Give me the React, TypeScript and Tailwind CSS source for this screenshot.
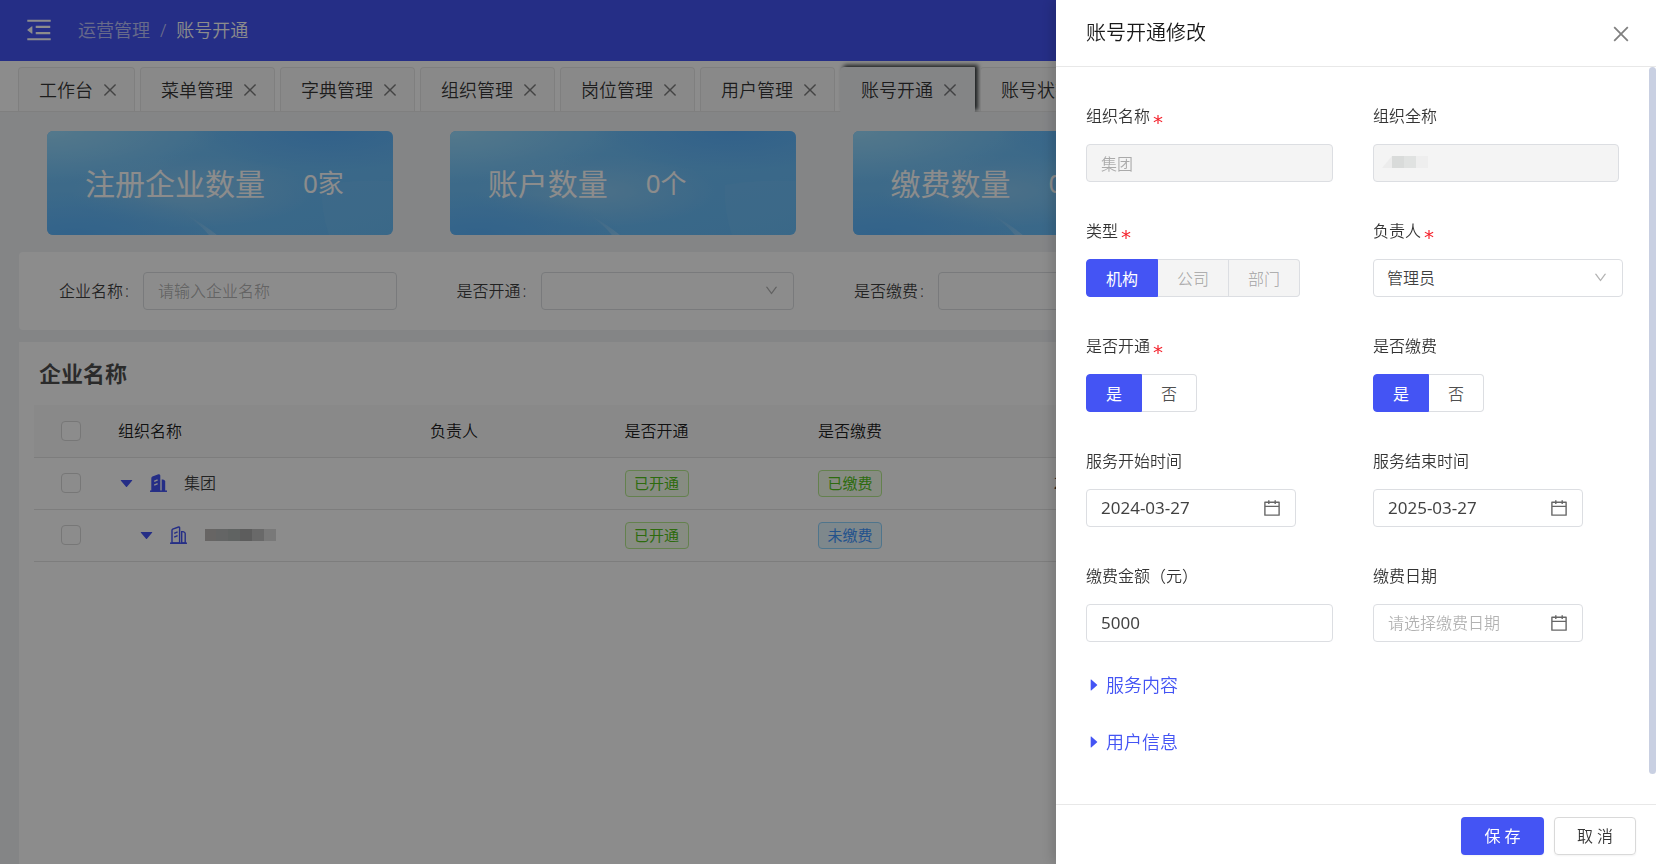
import { useState } from 'react'
import type { ReactNode } from 'react'
import {
  AiFillCaretDown,
  AiFillCaretRight,
  AiOutlineCalendar,
  AiOutlineClose,
  AiOutlineDown,
  AiOutlineMenuFold,
} from 'react-icons/ai'
import clsx from 'clsx'

const TABS = ['工作台', '菜单管理', '字典管理', '组织管理', '岗位管理', '用户管理', '账号开通', '账号状态']

const STATS = [
  { label: '注册企业数量', value: '0家' },
  { label: '账户数量', value: '0个' },
  { label: '缴费数量', value: '0个' },
  { label: '到期数量', value: '0个' },
]

const CONTROL = 'h-[38px] border border-[#dcdee2] rounded bg-white text-black/75 placeholder:text-black/30 outline-none'

function BuildingIcon({ filled = false }: { filled?: boolean }) {
  return (
    <svg width="17" height="18" viewBox="0 0 17 18" className="text-[#4454f4] shrink-0" aria-hidden="true">
      <path d="M0 17.2H17" stroke="currentColor" strokeWidth="1.5" />
      <path
        d="M2 17V4.4Q2 3.6 2.7 3.2L8.6 1Q9.6.8 9.6 1.7V17Z"
        fill={filled ? 'currentColor' : 'none'}
        stroke="currentColor"
        strokeWidth="1.4"
      />
      <path
        d="M11.7 5.6H13Q15.2 6.2 15.2 7.6V17H11.7Z"
        fill={filled ? 'currentColor' : 'none'}
        stroke={filled ? 'none' : 'currentColor'}
        strokeWidth="1.4"
      />
      <path d="M4.2 7.4L7.6 5.8M4.2 11.2L7.6 9.6" stroke={filled ? '#fff' : 'currentColor'} strokeWidth="1.4" />
    </svg>
  )
}

function StatCard({ label, value, id }: { label: string; value: string; id: string }) {
  return (
    <div className="relative h-[104px] rounded-md overflow-hidden bg-linear-to-br from-[#73c4fb] to-[#66bbf8]">
      <svg className="absolute inset-0 w-full h-full" viewBox="0 0 346 104" preserveAspectRatio="none" aria-hidden="true">
        <defs>
          <radialGradient id={`${id}-tl`} cx="0" cy="0" r="0.5">
            <stop offset="0" stopColor="#9adcff" />
            <stop offset="1" stopColor="#9adcff" stopOpacity="0" />
          </radialGradient>
          <radialGradient id={`${id}-bl`} cx="0.08" cy="1" r="0.42">
            <stop offset="0" stopColor="#5cb4fc" />
            <stop offset="1" stopColor="#5cb4fc" stopOpacity="0" />
          </radialGradient>
          <radialGradient id={`${id}-tr`} cx="0.82" cy="0" r="0.4">
            <stop offset="0" stopColor="#5ab0fb" />
            <stop offset="1" stopColor="#5ab0fb" stopOpacity="0" />
          </radialGradient>
          <radialGradient id={`${id}-mid`} cx="0.42" cy="0.58" r="0.35">
            <stop offset="0" stopColor="#8accf7" />
            <stop offset="1" stopColor="#8accf7" stopOpacity="0" />
          </radialGradient>
          <linearGradient id={`${id}-ray`} x1="0" y1="0" x2="1" y2="1">
            <stop offset="0" stopColor="#cdeaff" stopOpacity="0" />
            <stop offset="1" stopColor="#cdeaff" stopOpacity="0.35" />
          </linearGradient>
        </defs>
        <rect width="346" height="104" fill={`url(#${id}-mid)`} />
        <rect width="346" height="104" fill={`url(#${id}-tl)`} />
        <rect width="346" height="104" fill={`url(#${id}-bl)`} />
        <rect width="346" height="104" fill={`url(#${id}-tr)`} />
        <path d="M275 54Q310 48 346 50V104H282Q274 80 275 54Z" fill="#8fd0f8" fillOpacity="0.15" />
        <path d="M140 84Q158 94 170 104H162Q154 94 140 84Z" fill={`url(#${id}-ray)`} />
      </svg>
      <div className="relative h-full flex items-center gap-[38px] pl-[38px] text-white font-normal whitespace-nowrap">
        <span className="text-[30px]">{label}</span>
        <span className="text-[26px]">{value}</span>
      </div>
    </div>
  )
}

function Filter({ id, label, children }: { id: string; label: string; children: ReactNode }) {
  return (
    <div className="flex items-center px-[30px]">
      <label htmlFor={id} className="w-[84px] shrink-0 text-black/75 whitespace-nowrap">
        {label}<span className="ml-0.5">:</span>
      </label>
      {children}
    </div>
  )
}

function SelectBox({ id, children, className }: { id: string; children?: ReactNode; className?: string }) {
  return (
    <div className={clsx('relative', className)}>
      <select id={id} className={clsx(CONTROL, 'w-full appearance-none pl-[13px]')}>
        {children ?? <option value="" />}
      </select>
      <AiOutlineDown size={15} className="absolute right-[15px] top-[11px] text-black/30 pointer-events-none" />
    </div>
  )
}

function Tag({ color, children }: { color: 'green' | 'blue'; children: ReactNode }) {
  return (
    <span
      className={clsx(
        'inline-flex items-center justify-center w-16 h-[27px] border rounded text-[15px] font-normal',
        color === 'green' ? 'text-[#52c41a] bg-[#f6ffed] border-[#b7eb8f]' : 'text-[#4096ff] bg-[#e6f7ff] border-[#91d5ff]',
      )}
    >
      {children}
    </span>
  )
}

function TableCheckbox({ label }: { label: string }) {
  return (
    <input
      type="checkbox"
      aria-label={label}
      className="block mx-auto w-5 h-5 appearance-none border border-[#d9d9d9] rounded-sm bg-white checked:bg-[#4454f4]"
    />
  )
}

// Censored organisation name in the tree
function MaskedName() {
  return (
    <span className="flex h-3" aria-hidden="true">
      <i className="w-[11px] bg-[#bcb9b7]" />
      <i className="w-3 bg-[#b6b9b9]" />
      <i className="w-3 bg-[#b0b4b3]" />
      <i className="w-3 bg-[#a9a9a9]" />
      <i className="w-3 bg-[#c0c0c0]" />
      <i className="w-3 bg-[#dcdcdc]" />
    </span>
  )
}

function LabelText({ label, required }: { label: string; required?: boolean }) {
  return (
    <>
      {label}
      {required && <span className="ml-[3px] mt-3 text-xl leading-5 font-normal font-['DejaVu_Sans'] text-[#f5222d]">*</span>}
    </>
  )
}

function Field({ label, id, required, children }: { label: string; id: string; required?: boolean; children: ReactNode }) {
  return (
    <div className="h-[115px]">
      <label htmlFor={id} className="flex h-6 items-center mb-4 text-black/80">
        <LabelText label={label} required={required} />
      </label>
      {children}
    </div>
  )
}

function Segmented({ label, id, required, options, disabled }: {
  label: string
  id: string
  required?: boolean
  options: string[]
  disabled?: boolean
}) {
  const [value, setValue] = useState(options[0])
  return (
    <fieldset className="h-[115px]">
      <legend className="flex h-6 items-center mb-4 text-black/80">
        <LabelText label={label} required={required} />
      </legend>
      <div className="flex">
        {options.map(o => (
          <label
            key={o}
            className={clsx(
              'relative flex items-center justify-center h-[38px] pt-0.5 px-[19px] border border-l-0 first:border-l first:rounded-l last:rounded-r',
              value === o && 'bg-[#4454f4] border-[#4454f4] text-white font-normal',
              value !== o && disabled && 'bg-[#f4f4f4] border-[#dcdee2] text-black/30',
              value !== o && !disabled && 'bg-white border-[#dcdee2] text-black/70',
            )}
          >
            <input
              type="radio"
              name={id}
              value={o}
              checked={value === o}
              disabled={disabled}
              onChange={() => setValue(o)}
              className="absolute inset-0 opacity-0"
            />
            {o}
          </label>
        ))}
      </div>
    </fieldset>
  )
}

function DateBox({ id, value, placeholder }: { id: string; value?: string; placeholder?: string }) {
  return (
    <div className="relative w-[210px]">
      <input
        id={id}
        defaultValue={value}
        placeholder={placeholder}
        className={clsx(CONTROL, 'w-full pl-[14px] pr-10', value && 'pb-0.5 text-[17px] font-normal')}
      />
      <AiOutlineCalendar size={20} className="absolute right-[14px] top-[9px] text-black/60 pointer-events-none" />
    </div>
  )
}

function Drawer() {
  return (
    <section
      role="dialog"
      aria-label="账号开通修改"
      className="fixed right-0 inset-y-0 w-[600px] max-w-full bg-white flex flex-col shadow-[-4px_0_12px_rgba(0,0,0,0.15)]"
    >
      <header className="h-[67px] shrink-0 flex items-center justify-between pl-[30px] pr-6 border-b border-[#e8e8e8]">
        <h2 className="text-xl leading-6 text-black/90">账号开通修改</h2>
        <button aria-label="关闭" className="mt-0.5 text-black/50">
          <AiOutlineClose size={22} />
        </button>
      </header>

      <div className="flex-1 min-h-0 flex">
        <form className="flex-1 min-w-0 overflow-hidden pl-[30px] pt-[37px]">
          <div className="grid grid-cols-[287px_250px]">
            <Field label="组织名称" id="org-name" required>
              <input id="org-name" disabled defaultValue="集团" className={clsx(CONTROL, 'w-[247px] px-[14px] !bg-[#f4f4f4] !text-black/30')} />
            </Field>
            <Field label="组织全称" id="org-full">
              <div className="relative">
                <input id="org-full" disabled className={clsx(CONTROL, 'w-[246px] px-[14px] !bg-[#f4f4f4]')} />
                <span className="absolute left-[9px] top-3 flex h-3" aria-hidden="true">
                  <i className="w-[10px] bg-[#ececec] [clip-path:polygon(0_100%,100%_0,100%_100%)]" />
                  <i className="w-3 bg-[#d9dbda]" />
                  <i className="w-3 bg-[#e0e2e1]" />
                  <i className="w-3 bg-[#eeeeee]" />
                </span>
              </div>
            </Field>
            <Segmented label="类型" id="type" required disabled options={['机构', '公司', '部门']} />
            <Field label="负责人" id="owner" required>
              <SelectBox id="owner">
                <option>管理员</option>
              </SelectBox>
            </Field>
            <Segmented label="是否开通" id="opened" required options={['是', '否']} />
            <Segmented label="是否缴费" id="paid" options={['是', '否']} />
            <Field label="服务开始时间" id="start">
              <DateBox id="start" value="2024-03-27" />
            </Field>
            <Field label="服务结束时间" id="end">
              <DateBox id="end" value="2025-03-27" />
            </Field>
            <Field label="缴费金额（元）" id="amount">
              <input id="amount" defaultValue="5000" className={clsx(CONTROL, 'w-[247px] px-[14px] pb-0.5 text-[17px] font-normal')} />
            </Field>
            <Field label="缴费日期" id="pay-date">
              <DateBox id="pay-date" placeholder="请选择缴费日期" />
            </Field>
          </div>
          <div className="flex flex-col items-start gap-[33px] -mt-1.5 text-lg leading-6 text-[#4454f4]">
            {['服务内容', '用户信息'].map(t => (
              <button key={t} type="button" className="flex items-center gap-1">
                <AiFillCaretRight size={16} />
                {t}
              </button>
            ))}
          </div>
        </form>
        <div className="w-[7px] shrink-0 pb-[30px]">
          <div className="h-full rounded bg-[#c9d0e2]" />
        </div>
      </div>

      <footer className="h-[60px] shrink-0 flex items-center justify-end gap-[10px] pt-0.5 pr-5 border-t border-[#e8e8e8]">
        <button className="h-[38px] w-[83px] rounded-sm bg-[#4454f4] text-white font-normal shadow-xs">保 存</button>
        <button className="h-[38px] w-[82px] rounded-sm border border-[#d9d9d9] text-black/80 shadow-xs">取 消</button>
      </footer>
    </section>
  )
}

export default function App() {
  return (
    <div className="h-screen overflow-hidden flex flex-col bg-[#f0f2f5] text-base font-[350] font-['Noto_Sans','Noto_Sans_CJK_SC',sans-serif]">
      <header className="h-[61px] shrink-0 flex items-center pl-6 pb-0.5 bg-[#4454f4] text-white">
        <button aria-label="收起菜单">
          <AiOutlineMenuFold size={30} />
        </button>
        <nav className="flex items-center gap-[10px] ml-6 text-lg">
          <a href="#ops" className="text-white/65">运营管理</a>
          <span className="text-white/70">/</span>
          <span>账号开通</span>
        </nav>
      </header>

      <nav className="relative h-[51px] shrink-0 flex items-end gap-[5px] pl-[18px] bg-white border-b border-[#e8e8e8] [clip-path:inset(0)]">
        {TABS.map(t => (
          <div
            key={t}
            className={clsx(
              'shrink-0 flex items-center gap-2 pl-5 pr-[15px] border text-lg text-black/80 rounded-t',
              t === '账号开通'
                ? 'h-[45px] -mb-px rounded-tr-none bg-[#f0f2f5] border-[#f0f2f5] shadow-[3px_-2px_4px_#33393b]'
                : 'h-11 bg-[#fafafa] border-[#e8e8e8] border-b-0',
            )}
          >
            <a href="#tab">{t}</a>
            <button aria-label={`关闭${t}`} className="text-black/50">
              <AiOutlineClose size={18} />
            </button>
          </div>
        ))}
      </nav>

      <main className="flex-1 min-h-0 flex flex-col pl-[19px] pr-[27px]">
        <div className="shrink-0 grid grid-cols-4 gap-[57px] px-7 pt-[19px] pb-[17px]">
          {STATS.map((s, i) => (
            <StatCard key={s.label} id={`stat${i}`} {...s} />
          ))}
        </div>

        <form className="shrink-0 h-[78px] grid grid-cols-4 items-center pl-[10px] pr-[10px] bg-white rounded-sm">
          <Filter id="f-name" label="企业名称">
            <input id="f-name" placeholder="请输入企业名称" className={clsx(CONTROL, 'flex-1 min-w-0 px-[14px]')} />
          </Filter>
          <Filter id="f-open" label="是否开通">
            <SelectBox id="f-open" className="flex-1" />
          </Filter>
          <Filter id="f-paid" label="是否缴费">
            <SelectBox id="f-paid" className="flex-1" />
          </Filter>
        </form>

        <section className="flex-1 mt-3 pl-[15px] pr-[15px] bg-white">
          <h1 className="h-[63px] flex items-center pl-[5px] text-[22px] font-bold text-black/70">企业名称</h1>
          <table className="w-full table-fixed border-collapse">
            <colgroup>
              <col className="w-[74px]" />
              <col className="w-[312px]" />
              <col className="w-[140px]" />
              <col className="w-[193px]" />
              <col className="w-[194px]" />
              <col className="w-[302px]" />
              <col />
            </colgroup>
            <thead>
              <tr className="h-[52px] bg-[#fafafa] border-b border-[#e4e4e4] text-black/90 [&>th]:font-[350]">
                <th><TableCheckbox label="全选" /></th>
                <th className="pl-[10px] text-left">组织名称</th>
                <th className="pl-[10px] text-left">负责人</th>
                <th>是否开通</th>
                <th>是否缴费</th>
                <th>缴费日期</th>
                <th>操作</th>
              </tr>
            </thead>
            <tbody className="text-black/75">
              <tr className="h-[52px] border-b border-[#e4e4e4]">
                <td><TableCheckbox label="集团" /></td>
                <td className="pl-[10px]">
                  <div className="flex items-center">
                    <AiFillCaretDown size={17} className="text-[#4454f4]" />
                    <span className="ml-[15px] mr-[17px]"><BuildingIcon filled /></span>
                    集团
                  </div>
                </td>
                <td />
                <td className="text-center"><Tag color="green">已开通</Tag></td>
                <td className="text-center"><Tag color="green">已缴费</Tag></td>
                <td className="text-center text-[17px] font-normal">2024-03-27</td>
                <td />
              </tr>
              <tr className="h-[52px] border-b border-[#e4e4e4]">
                <td><TableCheckbox label="下级组织" /></td>
                <td className="pl-[30px]">
                  <div className="flex items-center">
                    <AiFillCaretDown size={17} className="text-[#4454f4]" />
                    <span className="ml-[15px] mr-[18px]"><BuildingIcon /></span>
                    <MaskedName />
                  </div>
                </td>
                <td />
                <td className="text-center"><Tag color="green">已开通</Tag></td>
                <td className="text-center"><Tag color="blue">未缴费</Tag></td>
                <td />
                <td />
              </tr>
            </tbody>
          </table>
        </section>
      </main>

      <div className="fixed inset-0 bg-black/45" />
      <Drawer />
    </div>
  )
}
